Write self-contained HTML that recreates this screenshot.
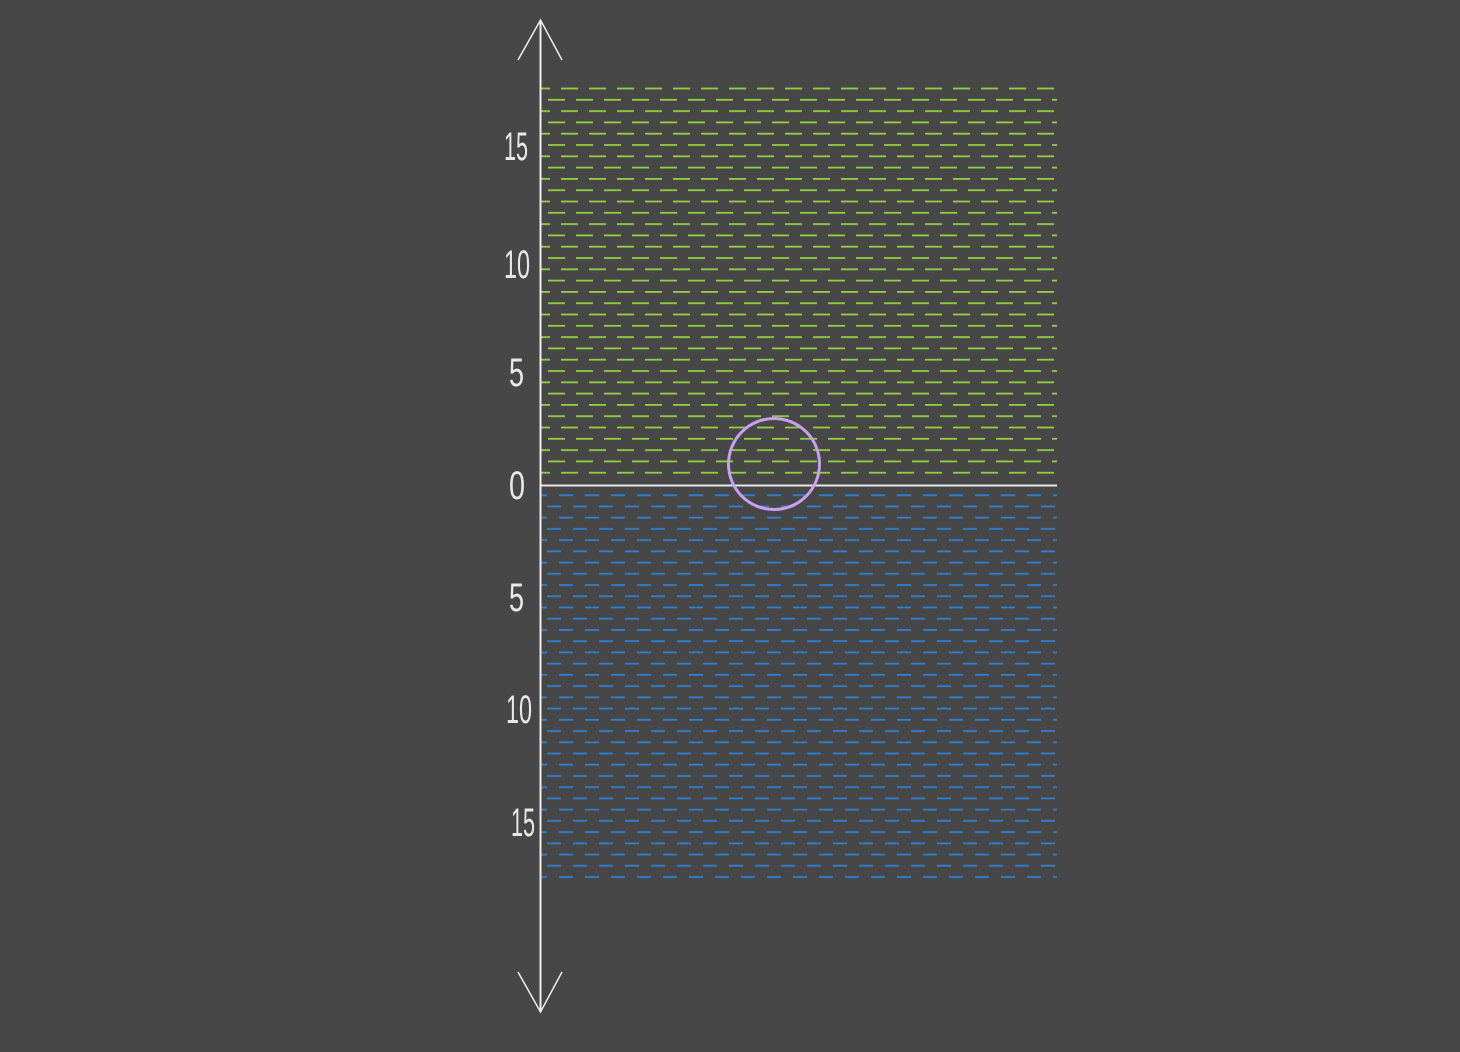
<!DOCTYPE html>
<html><head><meta charset="utf-8"><style>
html,body{margin:0;padding:0;background:#474747;}
svg{display:block}
</style></head><body>
<svg width="1460" height="1052" viewBox="0 0 1460 1052" xmlns="http://www.w3.org/2000/svg">
<defs>
<pattern id="g" patternUnits="userSpaceOnUse" x="533" y="87.6" width="28" height="22.6">
<rect x="0" y="0" width="17" height="1.8" fill="#92d040"/>
<rect x="0" y="11.3" width="4" height="1.8" fill="#92d040"/>
<rect x="15" y="11.3" width="13" height="1.8" fill="#92d040"/>
</pattern>
<pattern id="b" patternUnits="userSpaceOnUse" x="533" y="494.3" width="26" height="22.46">
<rect x="0" y="0" width="14" height="1.8" fill="#2f80d2"/>
<rect x="0" y="11.23" width="2" height="1.8" fill="#2f80d2"/>
<rect x="14" y="11.23" width="12" height="1.8" fill="#2f80d2"/>
</pattern>
</defs>
<rect x="540" y="87" width="517" height="390" fill="url(#g)"/>
<rect x="540" y="494" width="517" height="386" fill="url(#b)"/>
<line x1="540" y1="485.5" x2="1057" y2="485.5" stroke="#e6e6e6" stroke-width="2"/>
<line x1="540.5" y1="20" x2="540.5" y2="1012" stroke="#eeeeee" stroke-width="2"/>
<polyline points="518,60 540.5,20 562,60" fill="none" stroke="#eeeeee" stroke-width="1.5"/>
<polyline points="518,972 540.5,1012 562,972" fill="none" stroke="#eeeeee" stroke-width="1.5"/>
<circle cx="774" cy="464" r="45.5" fill="none" stroke="#c8a0f0" stroke-width="3"/>
<g fill="#e8e8e8" font-family="Liberation Sans, sans-serif" font-size="40" font-weight="normal">
<text x="504" y="160" textLength="24" lengthAdjust="spacingAndGlyphs">15</text>
<text x="504" y="278" textLength="26" lengthAdjust="spacingAndGlyphs">10</text>
<text x="509" y="386" textLength="15" lengthAdjust="spacingAndGlyphs">5</text>
<text x="509" y="499" textLength="16" lengthAdjust="spacingAndGlyphs">0</text>
<text x="509" y="611" textLength="15" lengthAdjust="spacingAndGlyphs">5</text>
<text x="506" y="723" textLength="26" lengthAdjust="spacingAndGlyphs">10</text>
<text x="511" y="836" textLength="24" lengthAdjust="spacingAndGlyphs">15</text>
</g>
</svg>
</body></html>
